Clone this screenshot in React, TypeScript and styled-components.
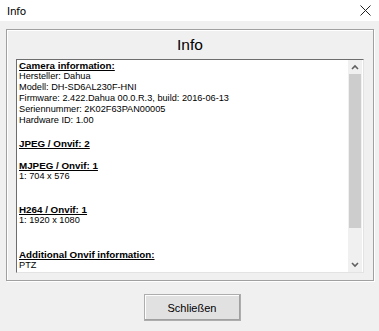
import React from 'react'
import styled, { createGlobalStyle } from 'styled-components'

const GlobalStyle = createGlobalStyle`
  html, body {
    margin: 0;
    padding: 0;
    background: #f0f0f0;
  }
  body {
    font-family: "Liberation Sans", Arial, sans-serif;
  }
`

const Window = styled.div`
  width: 379px;
  height: 331px;
  display: flex;
  flex-direction: column;
  background: #f0f0f0;
  overflow: hidden;
`

const TitleBar = styled.div`
  height: 21px;
  background: #fff;
  display: flex;
  align-items: center;
  justify-content: space-between;
  padding: 0 8px 0 7px;
  box-sizing: border-box;
`

const TitleText = styled.span`
  font-family: "DejaVu Sans", "Liberation Sans", sans-serif;
  font-size: 10.5px;
  color: #000;
  letter-spacing: -0.2px;
`

const Body = styled.div`
  flex: 1;
  display: flex;
  flex-direction: column;
  padding: 8px 5px 0 6px;
`

const GroupBox = styled.div`
  height: 252px;
  box-sizing: border-box;
  border: 1px solid #a0a0a0;
  box-shadow: inset 1px 1px 0 #fff, 1px 1px 0 #fff;
  display: flex;
  flex-direction: column;
  padding: 0 9px 7px 9px;
`

const GroupTitle = styled.div`
  text-align: center;
  font-size: 15.5px;
  height: 29px;
  line-height: 30px;
  color: #000;
`

const TextArea = styled.div`
  flex: 1;
  display: flex;
  background: #fff;
  border-top: 1px solid #6d6d6d;
  border-left: 1px solid #6d6d6d;
  border-right: 1px solid #e3e3e3;
  border-bottom: 1px solid #e3e3e3;
  overflow: hidden;
`

const Content = styled.div`
  flex: 1;
  padding: 0 0 0 2px;
  overflow: hidden;
`

const Line = styled.div<{ $heading?: boolean }>`
  height: 11.1px;
  line-height: 11px;
  font-size: ${p => (p.$heading ? '9.8px' : '9.2px')};
  font-weight: ${p => (p.$heading ? 700 : 400)};
  text-decoration: ${p => (p.$heading ? 'underline' : 'none')};
  color: #000;
  white-space: nowrap;
`

const ScrollBar = styled.div`
  width: 14px;
  display: flex;
  flex-direction: column;
  background: #f0f0f0;
  margin-right: 1px;
`

const Arrow = styled.div`
  height: 14px;
  display: flex;
  align-items: center;
  justify-content: center;
`

const Track = styled.div`
  flex: 1;
  display: flex;
  flex-direction: column;
`

const Thumb = styled.div`
  height: 154px;
  background: #cdcdcd;
  margin: 0 1px;
`

const Footer = styled.div`
  display: flex;
  justify-content: center;
  padding: 13px 0 0 4px;
`

const Button = styled.button`
  width: 97px;
  height: 27px;
  background: #e1e1e1;
  border: 1px solid #adadad;
  box-shadow: inset -1px -1px 0 #a0a0a0, inset 1px 1px 0 #fdfdfd;
  font-family: "Liberation Sans", Arial, sans-serif;
  font-size: 11px;
  color: #000;
  padding: 0;
`

const lines: { text: string; heading?: boolean }[] = [
  { text: 'Camera information:', heading: true },
  { text: 'Hersteller: Dahua' },
  { text: 'Modell: DH-SD6AL230F-HNI' },
  { text: 'Firmware: 2.422.Dahua 00.0.R.3, build: 2016-06-13' },
  { text: 'Seriennummer: 2K02F63PAN00005' },
  { text: 'Hardware ID: 1.00' },
  { text: '' },
  { text: 'JPEG / Onvif: 2', heading: true },
  { text: '' },
  { text: 'MJPEG / Onvif: 1', heading: true },
  { text: '1: 704 x 576' },
  { text: '' },
  { text: '' },
  { text: 'H264 / Onvif: 1', heading: true },
  { text: '1: 1920 x 1080' },
  { text: '' },
  { text: '' },
  { text: 'Additional Onvif information:', heading: true },
  { text: 'PTZ' },
  { text: 'Presets' },
]

const Chevron = ({ up }: { up?: boolean }) => (
  <svg width="8" height="6" viewBox="0 0 8 6">
    <path
      d={up ? 'M1 5 L4 2 L7 5' : 'M1 1 L4 4 L7 1'}
      fill="none"
      stroke="#606060"
      strokeWidth="1.6"
    />
  </svg>
)

const App = () => {
  return (
    <Window>
      <GlobalStyle />
      <TitleBar>
        <TitleText>Info</TitleText>
        <svg width="11" height="11" viewBox="0 0 11 11">
          <path d="M0.5 0.5 L10.5 10.5 M10.5 0.5 L0.5 10.5" stroke="#222" strokeWidth="1" />
        </svg>
      </TitleBar>
      <Body>
        <GroupBox>
          <GroupTitle>Info</GroupTitle>
          <TextArea>
            <Content>
              {lines.map((l, i) => (
                <Line key={i} $heading={l.heading}>{l.text}</Line>
              ))}
            </Content>
            <ScrollBar>
              <Arrow><Chevron up /></Arrow>
              <Track>
                <Thumb />
              </Track>
              <Arrow><Chevron /></Arrow>
            </ScrollBar>
          </TextArea>
        </GroupBox>
        <Footer>
          <Button>Schließen</Button>
        </Footer>
      </Body>
    </Window>
  )
}

export default App
